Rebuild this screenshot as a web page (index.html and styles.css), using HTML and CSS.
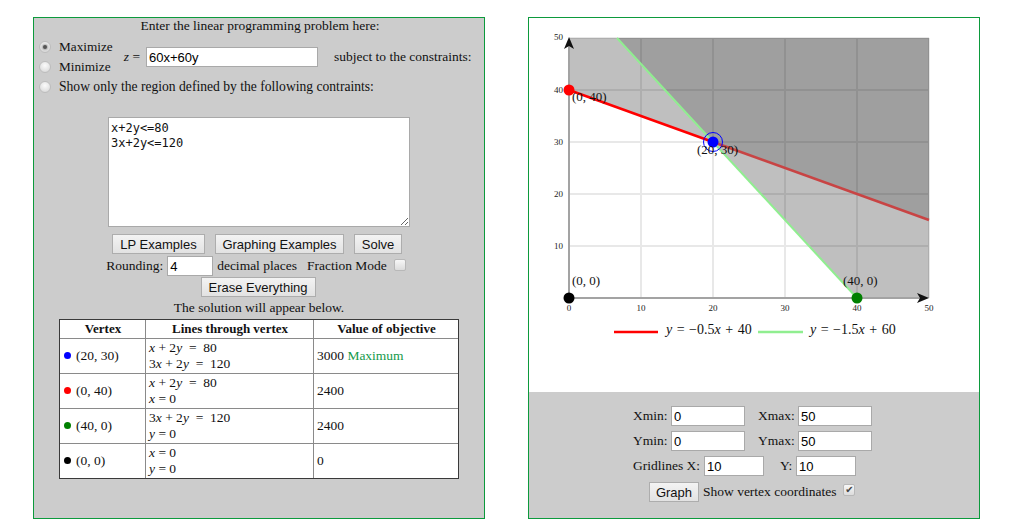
FILE: index.html
```html
<!DOCTYPE html>
<html>
<head>
<meta charset="utf-8">
<title>Linear Programming</title>
<link rel="stylesheet" href="styles.css">
</head>
<body>
<div class="page">
  <section class="panel lp">
    <div class="title">Enter the linear programming problem here:</div>
    <div class="objective">
      <div class="opts">
        <div class="opt"><span class="radio on"></span>Maximize</div>
        <div class="opt"><span class="radio"></span>Minimize</div>
      </div>
      <span class="zeq"><i>z</i> =</span>
      <input class="field zfield" type="text" value="60x+60y">
      <span class="subject">subject to the constraints:</span>
    </div>
    <div class="opt show"><span class="radio"></span>Show only the region defined by the following contraints:</div>
    <div class="tawrap"><textarea class="constraints" spellcheck="false">x+2y&lt;=80
3x+2y&lt;=120</textarea></div>
    <div class="btnrow">
      <button class="btn w-lp">LP Examples</button>
      <button class="btn w-ge">Graphing Examples</button>
      <button class="btn w-solve">Solve</button>
    </div>
    <div class="roundrow">
      <span>Rounding:</span>
      <input class="field round" type="text" value="4">
      <span class="dp">decimal places</span>
      <span class="fm">Fraction Mode</span>
      <span class="check fmcheck"></span>
    </div>
    <div class="eraserow"><button class="btn w-erase">Erase Everything</button></div>
    <div class="solution">The solution will appear below.</div>
    <table class="results">
      <colgroup><col class="c1"><col class="c2"><col class="c3"></colgroup>
      <thead>
        <tr><th>Vertex</th><th>Lines through vertex</th><th>Value of objective</th></tr>
      </thead>
      <tbody>
        <tr>
          <td><span class="dot blue"></span>(20, 30)</td>
          <td><i>x</i> + 2<i>y</i> &nbsp;= &nbsp;80<br>3<i>x</i> + 2<i>y</i> &nbsp;= &nbsp;120</td>
          <td>3000 <span class="maxtag">Maximum</span></td>
        </tr>
        <tr>
          <td><span class="dot red"></span>(0, 40)</td>
          <td><i>x</i> + 2<i>y</i> &nbsp;= &nbsp;80<br><i>x</i> = 0</td>
          <td>2400</td>
        </tr>
        <tr>
          <td><span class="dot green"></span>(40, 0)</td>
          <td>3<i>x</i> + 2<i>y</i> &nbsp;= &nbsp;120<br><i>y</i> = 0</td>
          <td>2400</td>
        </tr>
        <tr>
          <td><span class="dot black"></span>(0, 0)</td>
          <td><i>x</i> = 0<br><i>y</i> = 0</td>
          <td>0</td>
        </tr>
      </tbody>
    </table>
  </section>

  <section class="panel graphpanel">
    <svg class="graph" width="450" height="374" viewBox="0 0 450 374">
      <g stroke="#e8e8e8" stroke-width="2">
        <line x1="112" y1="20" x2="112" y2="280"/>
        <line x1="184" y1="20" x2="184" y2="280"/>
        <line x1="256" y1="20" x2="256" y2="280"/>
        <line x1="328" y1="20" x2="328" y2="280"/>
        <line x1="400" y1="20" x2="400" y2="280"/>
        <line x1="40" y1="20" x2="400" y2="20"/>
        <line x1="40" y1="72" x2="400" y2="72"/>
        <line x1="40" y1="124" x2="400" y2="124"/>
        <line x1="40" y1="176" x2="400" y2="176"/>
        <line x1="40" y1="228" x2="400" y2="228"/>
      </g>
      <polygon points="40,72 184,124 88,20 40,20" fill="#000" fill-opacity="0.25"/>
      <polygon points="184,124 328,280 400,280 400,202" fill="#000" fill-opacity="0.25"/>
      <polygon points="88,20 184,124 400,202 400,20" fill="#000" fill-opacity="0.375"/>
      <line x1="184" y1="124" x2="400" y2="202" stroke="#c84444" stroke-width="2.5"/>
      <line x1="40" y1="72" x2="184" y2="124" stroke="#ff0000" stroke-width="2.5"/>
      <line x1="88" y1="20" x2="328" y2="280" stroke="#90ee90" stroke-width="2"/>
      <line x1="40" y1="280" x2="40" y2="26" stroke="#a3a3a3" stroke-width="2"/>
      <line x1="40" y1="280" x2="394" y2="280" stroke="#a3a3a3" stroke-width="2"/>
      <path d="M40,19 L45,31 L40,28 L35,31 Z" fill="#111"/>
      <path d="M400,280 L388,275 L391,280 L388,285 Z" fill="#111"/>
      <g class="ticks">
        <text x="34" y="22" text-anchor="end">50</text>
        <text x="34" y="75" text-anchor="end">40</text>
        <text x="34" y="127" text-anchor="end">30</text>
        <text x="34" y="179" text-anchor="end">20</text>
        <text x="34" y="231" text-anchor="end">10</text>
        <text x="40" y="293" text-anchor="middle">0</text>
        <text x="112" y="293" text-anchor="middle">10</text>
        <text x="184" y="293" text-anchor="middle">20</text>
        <text x="256" y="293" text-anchor="middle">30</text>
        <text x="328" y="293" text-anchor="middle">40</text>
        <text x="400" y="293" text-anchor="middle">50</text>
      </g>
      <circle cx="40" cy="72" r="5.5" fill="#ff0000"/>
      <circle cx="184" cy="124" r="9.5" fill="none" stroke="#0000ff" stroke-width="1"/>
      <circle cx="184" cy="124" r="5.5" fill="#0000ff"/>
      <circle cx="328" cy="280" r="5.5" fill="#008000"/>
      <circle cx="40" cy="280" r="5.5" fill="#000"/>
      <g class="vlabels">
        <text x="43" y="83">(0, 40)</text>
        <text x="168" y="136">(20, 30)</text>
        <text x="43" y="267">(0, 0)</text>
        <text x="314" y="267">(40, 0)</text>
      </g>
      <line x1="85" y1="314" x2="129" y2="314" stroke="#ff0000" stroke-width="2.5"/>
      <line x1="229" y1="314" x2="274" y2="314" stroke="#90ee90" stroke-width="2.5"/>
      <g class="legend">
        <text x="137" y="316"><tspan font-style="italic">y</tspan> = −0.5<tspan font-style="italic">x</tspan> + 40</text>
        <text x="281" y="316"><tspan font-style="italic">y</tspan> = −1.5<tspan font-style="italic">x</tspan> + 60</text>
      </g>
    </svg>
    <div class="controls">
      <div class="crow">
        <span class="l1">Xmin:</span><input class="field w74" type="text" value="0">
        <span class="l2">Xmax:</span><input class="field w74" type="text" value="50">
      </div>
      <div class="crow">
        <span class="l1">Ymin:</span><input class="field w74" type="text" value="0">
        <span class="l2">Ymax:</span><input class="field w74" type="text" value="50">
      </div>
      <div class="crow">
        <span class="lg">Gridlines X:</span><input class="field w60" type="text" value="10">
        <span class="ly">Y:</span><input class="field w60" type="text" value="10">
      </div>
      <div class="crow graphrow">
        <button class="btn w-graph">Graph</button>
        <span class="gtext">Show vertex coordinates</span>
        <span class="check on">✔</span>
      </div>
    </div>
  </section>
</div>
</body>
</html>
```

FILE: styles.css
```css
* {
  box-sizing: border-box;
}

body {
  margin: 0;
  background: #ffffff;
  font-family: "Liberation Serif", "Times New Roman", serif;
  font-size: 13.5px;
  color: #111;
}

.page {
  display: flex;
  gap: 43px;
  padding: 17px 0 0 33px;
}

.panel {
  width: 452px;
  height: 502px;
  border: 1px solid #0c9a3c;
}

.lp {
  background: #cccccc;
}

.title {
  text-align: center;
  line-height: 16px;
  padding-left: 2px;
}

.objective {
  display: flex;
  align-items: center;
  margin-top: 3px;
}

.opts {
  width: 83px;
}

.opt {
  display: flex;
  align-items: center;
  height: 20px;
  white-space: nowrap;
}

.opts .opt {
  font-size: 13.25px;
}

.radio {
  flex: none;
  position: relative;
  width: 12px;
  height: 12px;
  margin: 0 8px 0 5px;
  border-radius: 50%;
  border: 1px solid #bdbdbd;
  background: radial-gradient(circle at 50% 35%, #fbfbfb 0, #e6e6e6 55%, #d2d2d2 100%);
}

.radio.on::after {
  content: "";
  position: absolute;
  left: 3px;
  top: 3px;
  width: 4px;
  height: 4px;
  border-radius: 50%;
  background: #555;
  box-shadow: 0 0 2px 1px rgba(80, 80, 80, 0.45);
}

.zeq {
  width: 29px;
  padding-right: 6px;
  text-align: right;
  white-space: nowrap;
}

.field {
  height: 20px;
  border: 1px solid #a9a9a9;
  background: #fff;
  font: 13px "Liberation Sans", Arial, sans-serif;
  color: #000;
  padding: 0 2px;
  margin: 0;
  outline: none;
  border-radius: 0;
}

.zfield {
  width: 172px;
}

.subject {
  margin-left: 16px;
  white-space: nowrap;
}

.show {
  font-size: 13.6px;
}

.tawrap {
  margin-top: 20px;
  height: 110px;
}

.constraints {
  display: block;
  margin: 0 auto;
  width: 302px;
  height: 110px;
  border: 1px solid #a9a9a9;
  background: #fff;
  font: 12px/15px "DejaVu Sans Mono", "Liberation Mono", monospace;
  color: #111;
  padding: 3px 2px;
  resize: both;
  outline: none;
}

.btnrow {
  display: flex;
  justify-content: center;
  gap: 10px;
  margin-top: 7px;
  padding-right: 4px;
}

.btn {
  height: 20px;
  padding: 0;
  margin: 0;
  border: 1px solid #adadad;
  border-radius: 0;
  background: linear-gradient(#f3f3f3, #e2e2e2);
  font: 13px "Liberation Sans", Arial, sans-serif;
  color: #111;
  white-space: nowrap;
}

.w-lp { width: 93px; }
.w-ge { width: 129px; }
.w-solve { width: 48px; }
.w-erase { width: 115px; }
.w-graph { width: 50px; }

.roundrow {
  display: flex;
  justify-content: center;
  align-items: center;
  height: 20px;
  margin-top: 2px;
  padding-right: 6px;
  white-space: nowrap;
}

.round {
  width: 46px;
  margin-left: 4px;
}

.dp {
  margin-left: 4px;
}

.fm {
  margin-left: 10px;
}

.check {
  flex: none;
  display: inline-flex;
  align-items: center;
  justify-content: center;
  width: 12px;
  height: 12px;
  border: 1px solid #b8b8b8;
  border-radius: 2px;
  background: linear-gradient(#f7f7f7, #dcdcdc);
  font: 10px "DejaVu Sans", sans-serif;
  color: #444;
  line-height: 1;
}

.fmcheck {
  margin-left: 7px;
  margin-top: -3px;
}

.eraserow {
  display: flex;
  justify-content: center;
  margin-top: 1px;
  padding-right: 2px;
}

.solution {
  text-align: center;
  line-height: 16px;
  margin-top: 3px;
}

.results {
  margin: 3px auto 0;
  width: 400px;
  table-layout: fixed;
  border-collapse: separate;
  border-spacing: 0;
  border: 1px solid #3a3a3a;
  background: #fff;
  line-height: 16px;
}

.results .c1 { width: 85px; }
.results .c2 { width: 168px; }
.results .c3 { width: 145px; }

.results th,
.results td {
  padding: 1px 2px 1px 3px;
  text-align: left;
  vertical-align: middle;
  white-space: nowrap;
}

.results th {
  text-align: center;
  font-weight: bold;
  font-size: 13px;
}

.results th + th,
.results td + td {
  border-left: 1px solid #8a8a8a;
}

.results tbody td {
  border-top: 1px solid #8a8a8a;
}

.dot {
  display: inline-block;
  width: 7px;
  height: 7px;
  border-radius: 50%;
  margin: 0 5px 0 1px;
  vertical-align: 1px;
}

.dot.blue { background: #0000ff; }
.dot.red { background: #ff0000; }
.dot.green { background: #008000; }
.dot.black { background: #000; }

.maxtag {
  color: #14994b;
}

.graphpanel {
  display: flex;
  flex-direction: column;
  background: #fff;
}

.graph {
  display: block;
  flex: none;
}

.ticks text {
  font: 9px "Liberation Serif", serif;
  fill: #222;
}

.vlabels text {
  font: 13px "Liberation Serif", serif;
  fill: #111;
}

.legend text {
  font: 14px "Liberation Serif", serif;
  fill: #111;
  word-spacing: 1px;
}

.controls {
  flex: 1;
  background: #cccccc;
  padding: 14px 0 0 104px;
}

.crow {
  display: flex;
  align-items: center;
  height: 20px;
  margin-top: 5px;
  white-space: nowrap;
}

.crow:first-child {
  margin-top: 0;
}

.l1 { width: 38px; }
.l2 { width: 40px; margin-left: 13px; }
.w74 { width: 74px; }
.lg { width: 71px; }
.w60 { width: 60px; }
.ly { width: 16px; margin-left: 16px; }

.graphrow {
  margin-top: 6px;
  margin-left: 16px;
}

.gtext {
  margin-left: 4px;
}

.graphrow .check {
  margin-left: 7px;
  margin-top: -4px;
}
```
